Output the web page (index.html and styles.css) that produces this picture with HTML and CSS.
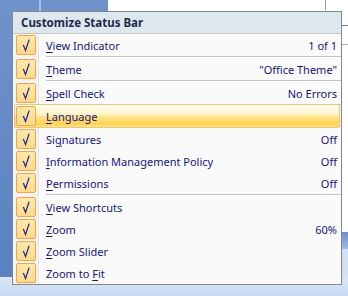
FILE: index.html
```html
<!DOCTYPE html>
<html lang="en">

<head>
    <meta charset="UTF-8" />
    <title>Customize Status Bar</title>
    <link rel="stylesheet" href="styles.css">
</head>

<body>

    <div class="desk">
        <div class="pane"></div>
        <div class="page"></div>
    </div>
    <div class="tray"></div>

    <div class="menu">
        <div class="menu-title">Customize Status Bar</div>

        <div class="items">
            <div class="item">
                <span class="check"><svg viewBox="0 0 20 20"><polyline points="7,10 9.5,16 13.5,4" /></svg></span>
                <span class="label"><u>V</u>iew Indicator</span>
                <span class="value">1 of 1</span>
            </div>
            <div class="sep"></div>
            <div class="item">
                <span class="check"><svg viewBox="0 0 20 20"><polyline points="7,10 9.5,16 13.5,4" /></svg></span>
                <span class="label"><u>T</u>heme</span>
                <span class="value">"Office Theme"</span>
            </div>
            <div class="sep"></div>
            <div class="item">
                <span class="check"><svg viewBox="0 0 20 20"><polyline points="7,10 9.5,16 13.5,4" /></svg></span>
                <span class="label"><u>S</u>pell Check</span>
                <span class="value">No Errors</span>
            </div>
            <div class="sep"></div>
            <div class="item hover">
                <span class="check"><svg viewBox="0 0 20 20"><polyline points="7,10 9.5,16 13.5,4" /></svg></span>
                <span class="label"><u>L</u>anguage</span>
                <span class="value"></span>
            </div>
            <div class="sep"></div>
            <div class="item">
                <span class="check"><svg viewBox="0 0 20 20"><polyline points="7,10 9.5,16 13.5,4" /></svg></span>
                <span class="label">Si<u>g</u>natures</span>
                <span class="value">Off</span>
            </div>
            <div class="item">
                <span class="check"><svg viewBox="0 0 20 20"><polyline points="7,10 9.5,16 13.5,4" /></svg></span>
                <span class="label"><u>I</u>nformation Management Policy</span>
                <span class="value">Off</span>
            </div>
            <div class="item">
                <span class="check"><svg viewBox="0 0 20 20"><polyline points="7,10 9.5,16 13.5,4" /></svg></span>
                <span class="label"><u>P</u>ermissions</span>
                <span class="value">Off</span>
            </div>
            <div class="sep"></div>
            <div class="item">
                <span class="check"><svg viewBox="0 0 20 20"><polyline points="7,10 9.5,16 13.5,4" /></svg></span>
                <span class="label"><u>V</u>iew Shortcuts</span>
                <span class="value"></span>
            </div>
            <div class="item">
                <span class="check"><svg viewBox="0 0 20 20"><polyline points="7,10 9.5,16 13.5,4" /></svg></span>
                <span class="label"><u>Z</u>oom</span>
                <span class="value">60%</span>
            </div>
            <div class="item">
                <span class="check"><svg viewBox="0 0 20 20"><polyline points="7,10 9.5,16 13.5,4" /></svg></span>
                <span class="label"><u>Z</u>oom Slider</span>
                <span class="value"></span>
            </div>
            <div class="item">
                <span class="check"><svg viewBox="0 0 20 20"><polyline points="7,10 9.5,16 13.5,4" /></svg></span>
                <span class="label">Zoom to <u>F</u>it</span>
                <span class="value"></span>
            </div>
        </div>
    </div>

</body>

</html>
```

FILE: styles.css
```css
* {
    margin: 0;
    padding: 0;
    box-sizing: border-box;
}

body {
    width: 348px;
    height: 296px;
    overflow: hidden;
    position: relative;
    font-family: "Noto Sans", "Liberation Sans", sans-serif;
    font-size: 11px;
    background-color: #d3e2f6;
}

/* window behind the menu */

.desk {
    display: flex;
    height: 277px;
}

.pane {
    width: 108px;
    background:
        linear-gradient(to right, transparent 39px, #a5bfe6 39px, #a5bfe6 41px, transparent 41px),
        linear-gradient(to bottom, #6f93cc, #5a80c0);
}

.page {
    flex: 1;
    background:
        linear-gradient(to right, transparent 217px, #9a9a9a 217px, #9a9a9a 218px, transparent 218px) 0 0 / 100% 10px no-repeat,
        linear-gradient(to bottom, transparent 25px, #5b7fbf 25px, #5b7fbf 26px, transparent 26px, transparent 44px, #b0b0b0 44px, #b0b0b0 45px, transparent 45px, transparent 232px, #6d91c9 232px, #9fbbe3 249px, #d0e0f5 249px),
        #ffffff;
}

.tray {
    height: 19px;
    background: linear-gradient(to bottom, #dbe7f8, #c6d9f1);
}

/* the menu */

.menu {
    position: absolute;
    left: 12px;
    top: 11px;
    width: 330px;
    border: 1px solid #868686;
    background-color: #fafafa;
    color: #15157a;
}

.menu-title {
    height: 22px;
    line-height: 21px;
    padding-left: 8px;
    font-size: 11.5px;
    font-weight: bold;
    color: #1e2b4f;
    background-color: #dde7ee;
    border-bottom: 1px solid #c5c5c5;
}

.items {
    background:
        linear-gradient(to right, #f3f3f3 25px, #e2e3e3 25px, #e2e3e3 26px, #ffffff 26px, #ffffff 27px, transparent 27px);
}

.item {
    display: flex;
    align-items: center;
    height: 22px;
    padding-right: 2px;
    border: 1px solid transparent;
    margin: 0 1px 0 1px;
}

.item.hover {
    border-color: #e5c97e;
    border-radius: 2px;
    background: linear-gradient(to bottom, #fffdf0 0%, #fff5cc 40%, #ffe38c 55%, #ffd24f 85%, #ffe08a 100%);
    margin-top: -2px;
    margin-bottom: -2px;
    height: 24px;
    position: relative;
}

.check {
    width: 20px;
    height: 20px;
    margin-left: 1px;
    border: 1px solid #eda64c;
    border-radius: 2px;
    background: linear-gradient(to bottom, #ffe8ad, #ffd98a);
}

.check svg {
    display: block;
    width: 18px;
    height: 18px;
}

.check polyline {
    fill: none;
    stroke: #1c2b8c;
    stroke-width: 1.4;
}

.label {
    flex: 1;
    margin-left: 10px;
}

.label u {
    text-underline-offset: 2px;
}

.value {
    text-align: right;
}

.sep {
    height: 2px;
    margin-left: 33px;
    border-top: 1px solid #c5c5c5;
    border-bottom: 1px solid #ffffff;
}
```
